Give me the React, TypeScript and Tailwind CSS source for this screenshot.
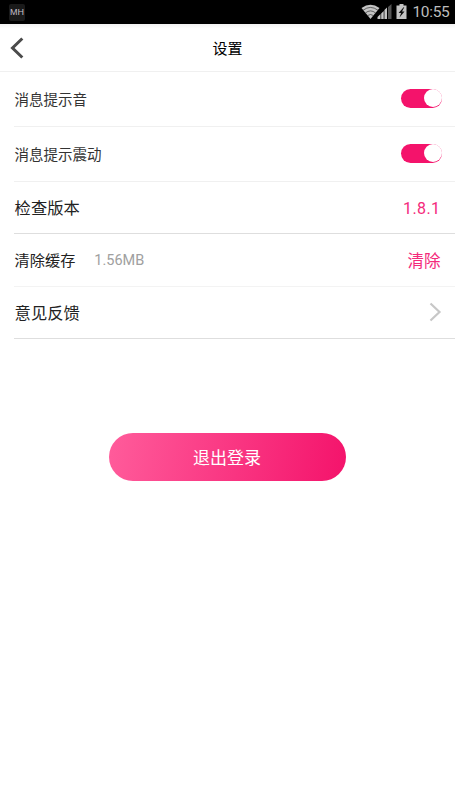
import type { ReactNode } from 'react';

function StatusBar() {
  return (
    <div className="flex h-6 items-center bg-black pl-[9px] pr-[5.500px]">
      <div className="flex h-[17px] w-4 items-center justify-center rounded-[2px] bg-[#1a1a1a] font-['Liberation_Sans',sans-serif] text-[9px] leading-none text-[#c4bec8]">
        MH
      </div>
      <div className="ml-auto flex items-center">
        <svg width="50" height="24" viewBox="0 0 50 24" fill="none">
          <path d="M0.500 8Q9.500 1.500 18.500 8L9.500 19Z" fill="#c4c4c4" />
          <path d="M2 10.300Q9.500 4.500 17 10.300M4.300 13Q9.500 8.800 14.700 13M6.500 15.600Q9.500 13.400 12.500 15.600" stroke="#333" strokeWidth="0.700" />
          <path d="M16.500 19v-2l3-3v5zM20.200 19v-5.500l2.500-2.500v8zM23.400 19V10l2.600-2.600V19z" fill="#c4c4c4" />
          <path d="M27 19V7L30.500 4v15z" fill="#555" />
          <path d="M38.500 4h4v1.500h3v13.500h-10V5.500h3z" fill="#c4c4c4" />
          <path d="M42.600 7.200l-5 5.800h2.500l-1.600 4.500 5-6h-2.500l2.300-4.300z" fill="#111" />
        </svg>
        <span className="ml-[1.500px] font-[Roboto,sans-serif] text-[15.500px] leading-6 tracking-[-0.300px] text-[#bdbdbd]">10:55</span>
      </div>
    </div>
  );
}

function Toggle() {
  return (
    <div className="mb-[2px] mr-[13px] flex h-[19px] w-[41.500px] items-center justify-end rounded-full bg-[#f4136b] p-[0.5px]">
      <div className="size-[18px] rounded-full bg-white" />
    </div>
  );
}

function Row({ className, children }: { className: string; children: ReactNode }) {
  return <div className={`ml-[14px] flex items-center justify-between border-b pl-[0.6px] ${className}`}>{children}</div>;
}

export default function App() {
  return (
    <div className="h-[809px] w-full overflow-hidden bg-white font-['Noto_Sans_CJK_SC',sans-serif] text-[#222]">
      <StatusBar />
      <header className="grid h-12 grid-cols-[1fr_auto_1fr] items-center border-b border-[#f0f0f0] bg-linear-to-b from-[#f2f2f2] to-white to-10%">
        <svg className="ml-[10px]" width="15" height="24" viewBox="0 0 15 24" fill="none">
          <path d="M12.300 2.500L2.500 12l9.800 9.500" stroke="#4b4b4b" strokeWidth="3" />
        </svg>
        <h1 className="text-[15px] leading-6 text-black">设置</h1>
      </header>
      <main>
        <Row className="h-[55px] border-[#f0f0f0] text-[14.500px] text-[#333]">
          <span>消息提示音</span>
          <Toggle />
        </Row>
        <Row className="h-[55px] border-[#f0f0f0] text-[14.500px] text-[#333]">
          <span>消息提示震动</span>
          <Toggle />
        </Row>
        <Row className="h-[52px] border-[#dedede] text-[16.300px]">
          <span>检查版本</span>
          <span className="mr-[14.500px] pt-[2px] font-[Roboto,sans-serif] text-[16px] tracking-[0.400px] text-[#f42a7b]">1.8.1</span>
        </Row>
        <Row className="h-[53px] border-[#f3f3f3] text-[15.200px]">
          <div className="flex items-center gap-[19px] pb-px">
            <span>清除缓存</span>
            <span className="pt-[2px] font-[Roboto,sans-serif] text-[14.500px] text-[#a0a0a0]">1.56MB</span>
          </div>
          <span className="mr-[14.500px] text-[16.500px] text-[#f42a7b]">清除</span>
        </Row>
        <Row className="h-[52px] border-[#dedede] text-[16.300px]">
          <span>意见反馈</span>
          <svg className="mb-px mr-[13px]" width="14" height="20" viewBox="0 0 14 20" fill="none">
            <path d="M2.500 1.500L11.500 10l-9 8.500" stroke="#c7c7c7" strokeWidth="2.200" />
          </svg>
        </Row>
        <button className="ml-[109px] mt-[94px] flex h-12 w-[237px] items-center justify-center rounded-full bg-linear-[100deg,#ff5c9b,#f4136b] pr-px text-[17px] text-white">
          退出登录
        </button>
      </main>
    </div>
  );
}
